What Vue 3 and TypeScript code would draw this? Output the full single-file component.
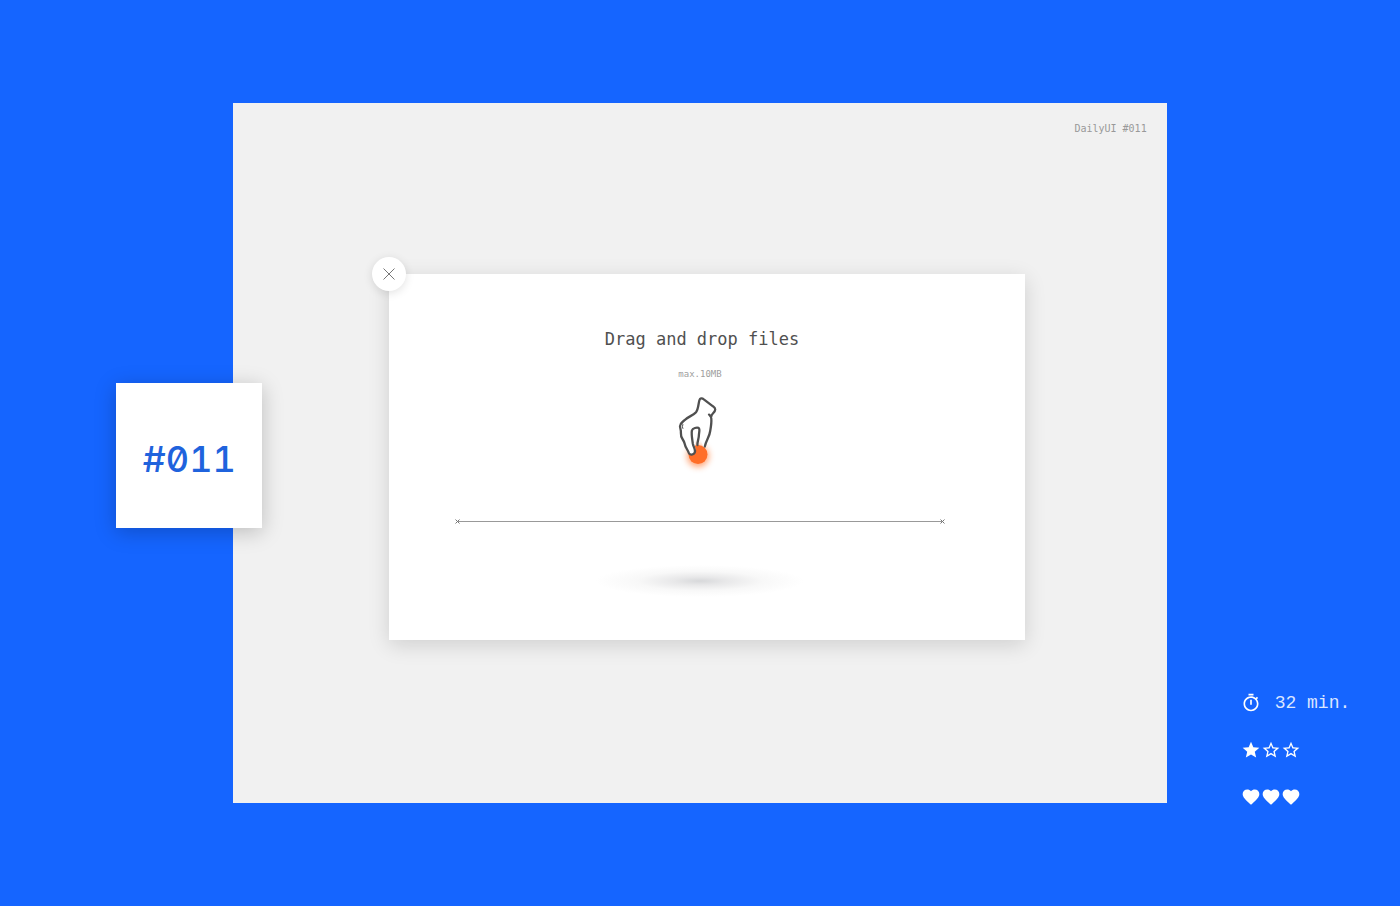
<script setup lang="ts">
import { ref } from 'vue'

const duration = '32 min.'
const difficulty = 1
const slots = [1, 2, 3]
const open = ref(true)

const starFull = 'M12 17.27 18.18 21l-1.64-7.03L22 9.24l-7.19-.61L12 2 9.19 8.63 2 9.24l5.46 4.73L5.82 21z'
const starOutline = 'M22 9.24l-7.19-.62L12 2 9.19 8.63 2 9.24l5.46 4.73L5.82 21 12 17.27 18.18 21l-1.63-7.03L22 9.24zM12 15.4l-3.76 2.27 1-4.28-3.32-2.88 4.38-.38L12 6.1l1.71 4.04 4.38.38-3.32 2.88 1 4.28L12 15.4z'
const heart = 'M12 21.35l-1.45-1.32C5.4 15.36 2 12.28 2 8.5 2 5.42 4.42 3 7.5 3c1.74 0 3.41.81 4.5 2.09C13.09 3.81 14.76 3 16.5 3 19.58 3 22 5.42 22 8.5c0 3.78-3.4 6.86-8.55 11.54L12 21.35z'
</script>

<template>
  <div class="page">
    <div class="badge">#011</div>

    <main class="canvas">
      <header class="caption">DailyUI #011</header>

      <section v-if="open" class="dialog" aria-labelledby="drop-title">
        <button class="close" type="button" aria-label="Close" @click="open = false">
          <svg viewBox="0 0 12 12" width="12" height="12"><path d="M.5.5l11 11M11.5.5l-11 11" /></svg>
        </button>
        <h1 id="drop-title">Drag and drop files</h1>
        <p class="limit">max.10MB</p>

        <svg class="hand" viewBox="0 0 80 100" width="80" height="100" aria-hidden="true">
          <circle class="glow" cx="38" cy="71" r="11" />
          <circle class="ball" cx="38" cy="69.5" r="9.5" />
          <path
            class="skin"
            d="M41.5 13.3Q38.5 15 37.8 20L36.5 27Q35.5 29 32 30.5L21.2 39Q19.5 41 20.2 44L20.6 52Q23 57 24 61Q26 65 28.5 67.5Q31 70.5 34 68.5Q36.5 67 35.5 64Q34.5 61 35 58L38.8 43L40 53L43.5 62L45 61.5L48.5 50L51 42L51.5 33L49.5 29L55 24.5L55 22Z"
          />
          <path
            class="ink"
            d="M44.8 61.5C46.3 55 49.5 52 50.2 46C51 41.5 51.7 38 51.3 33.5C51.2 31 50 30.7 49 29.6M51.3 31.6C51.3 28.5 55.2 27.5 55.2 24.5C55.2 23 54.4 22.2 53 21.3L43.8 14.3C42 12.8 40 13.1 39.4 15.2C38.3 18.8 38.5 24 36 27.2C33 30.8 27.5 31.8 24.5 35.2C22 37.6 19.8 38.5 20 41.2C20.2 44 21.2 44.8 20.9 48C20.4 53.5 23.8 54.3 24.6 58.5C25.3 62.5 27.8 64.8 28.9 68.2C29.8 70.5 33.8 69.8 34.8 67.5C36 65 33.5 62.5 32.8 58.5C32.2 54 31.2 49 31.9 45.5C32.7 42.8 36.8 42.4 38.6 42.9C40.3 43.8 39 47.500 38.9 50C38.900 54 37.200 56.500 37.400 60"
          />
          <path class="crease" d="M22.8 39.5Q21.8 42 22.8 43.5" />
        </svg>

        <div class="cord" aria-hidden="true">
          <svg viewBox="0 0 5 5" width="5" height="5"><path d="M.5.5l4 4M4.500.5l-4 4" /></svg>
          <svg viewBox="0 0 5 5" width="5" height="5"><path d="M.5.5l4 4M4.500.5l-4 4" /></svg>
        </div>

        <div class="ground"></div>
      </section>
    </main>

    <aside class="stats">
      <div class="row">
        <svg viewBox="0 0 24 24" width="20" height="20" aria-hidden="true">
          <path d="M15 1H9v2h6V1zm-4 13h2V8h-2v6zm8.030-6.610l1.420-1.420c-.43-.51-.9-.99-1.410-1.410l-1.420 1.420C16.070 4.740 14.120 4 12 4c-4.970 0-9 4.030-9 9s4.020 9 9 9 9-4.030 9-9c0-2.120-.74-4.070-1.970-5.610zM12 20c-3.870 0-7-3.130-7-7s3.130-7 7-7 7 3.130 7 7-3.130 7-7 7z" />
        </svg>
        <span class="time">{{ duration }}</span>
      </div>
      <div class="row" role="img" aria-label="Difficulty 1 of 3">
        <svg v-for="n in slots" :key="n" viewBox="0 0 24 24" width="20" height="20">
          <path :d="n <= difficulty ? starFull : starOutline" />
        </svg>
      </div>
      <div class="row" role="img" aria-label="Enjoyment 3 of 3">
        <svg v-for="n in slots" :key="n" viewBox="0 0 24 24" width="20" height="20">
          <path :d="heart" />
        </svg>
      </div>
    </aside>
  </div>
</template>

<style>
body {
  margin: 0;
  background: #1565ff;
}
</style>

<style scoped>
.page {
  box-sizing: border-box;
  min-height: 100vh;
  padding: 103px 0;
  display: grid;
  grid-template-columns: 1fr 4fr 1fr;
  background: #1565ff;
  font-family: "DejaVu Sans Mono", monospace;
}

.badge {
  grid-column: 1;
  place-self: center end;
  z-index: 1;
  margin: 5px -29px 0 0;
  width: 146px;
  height: 145px;
  box-sizing: border-box;
  padding-top: 6px;
  display: flex;
  align-items: center;
  justify-content: center;
  background: #fff;
  color: #1f63dd;
  font-family: Inter, sans-serif;
  font-size: 36px;
  font-weight: 500;
  font-feature-settings: "tnum", "zero";
  box-shadow: 0 4px 20px rgba(0, 0, 0, 0.22);
}

.canvas {
  display: flex;
  flex-direction: column;
  background: #f1f1f1;
}

.caption {
  padding: 20px 20px 0;
  text-align: right;
  font-size: 10px;
  line-height: 12px;
  color: #999;
}

.dialog {
  position: relative;
  width: 68.2%;
  margin: 139px auto 0;
  left: 7px;
  padding-bottom: 43px;
  display: flex;
  flex-direction: column;
  align-items: center;
  background: #fff;
  box-shadow: 0 5px 20px rgba(0, 0, 0, 0.14);
}

.close {
  position: absolute;
  top: -17px;
  left: -17px;
  width: 34px;
  height: 34px;
  padding: 0;
  display: grid;
  place-items: center;
  border: 0;
  border-radius: 50%;
  background: #fff;
  box-shadow: 0 2px 10px rgba(0, 0, 0, 0.12);
  cursor: pointer;
}

.close path {
  fill: none;
  stroke: #777;
  stroke-width: 1;
}

h1 {
  margin: 53px 10px 0 0;
  font-size: 17px;
  font-weight: 400;
  line-height: 24px;
  color: #505050;
}

.limit {
  margin: 17px 14px 0 0;
  font-size: 9px;
  line-height: 12px;
  color: #a0a0a0;
}

.hand {
  margin: 5px 14px 0 0;
}

.glow {
  fill: #ff6b20;
  opacity: 0.6;
  filter: blur(3px);
}

.ball {
  fill: #ff6e28;
}

.skin {
  fill: #fff;
}

.ink,
.crease {
  fill: none;
  stroke: #505050;
  stroke-width: 2.3;
  stroke-linecap: round;
  stroke-linejoin: round;
}

.crease {
  stroke-width: 1;
}

.cord {
  width: 77%;
  height: 7px;
  margin: 33px 14px 0 0;
  display: flex;
  align-items: center;
  justify-content: space-between;
  background: linear-gradient(#999, #999) center / calc(100% - 4px) 1px no-repeat;
}

.cord path {
  fill: none;
  stroke: #777;
  stroke-width: 1;
}

.ground {
  width: 208px;
  height: 32px;
  margin: 40px 14px 0 0;
  background: radial-gradient(closest-side, #d7d8da, #e8e8e9 25%, #f8f8f8 60%, #fff);
}

.stats {
  align-self: end;
  margin-bottom: -6px;
  padding-left: 74px;
  display: flex;
  flex-direction: column;
  gap: 23px;
}

.row {
  height: 24px;
  display: flex;
  align-items: center;
}

.row svg {
  flex: none;
  fill: #fff;
}

.time {
  margin-left: 14px;
  font-family: "Liberation Mono", monospace;
  font-size: 18px;
  line-height: 24px;
  white-space: nowrap;
  color: #dbe6ff;
}
</style>
